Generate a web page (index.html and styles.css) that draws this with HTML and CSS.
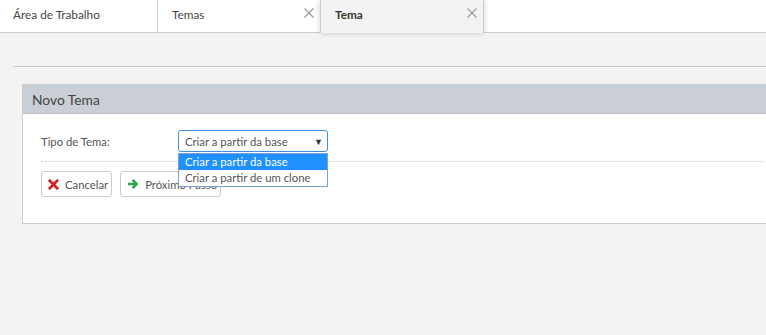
FILE: index.html
```html
<!DOCTYPE html>
<html lang="pt-BR">
<head>
    <meta charset="UTF-8">
    <meta name="viewport" content="width=device-width, initial-scale=1.0">
    <title>Tema</title>
    <link rel="stylesheet" href="styles.css">
</head>
<body>
    <div class="tabs">
        <div class="tab">Área de Trabalho</div>
        <div class="tab closable">Temas
            <svg class="tab-close" viewBox="0 0 10 10" width="10" height="10">
                <path d="M0.5 0.5 L9.5 9.5 M9.5 0.5 L0.5 9.5" stroke="#999" stroke-width="1.2"/>
            </svg>
        </div>
        <div class="tab closable active">Tema
            <svg class="tab-close" viewBox="0 0 10 10" width="10" height="10">
                <path d="M0.5 0.5 L9.5 9.5 M9.5 0.5 L0.5 9.5" stroke="#999" stroke-width="1.2"/>
            </svg>
        </div>
    </div>

    <div class="content">
        <hr class="separator">

        <div class="panel">
            <div class="panel-header">Novo Tema</div>
            <div class="panel-body">
                <div class="form-row">
                    <label class="form-label" for="tipoTema">Tipo de Tema:</label>
                    <div class="select-wrap">
                        <div class="select" id="tipoTema">
                            <span>Criar a partir da base</span>
                            <span class="select-arrow">&#9660;</span>
                        </div>
                        <ul class="select-list">
                            <li class="selected">Criar a partir da base</li>
                            <li>Criar a partir de um clone</li>
                        </ul>
                    </div>
                </div>
                <div class="form-actions">
                    <button type="button" class="btn">
                        <svg class="icon" viewBox="0 0 12 12" width="11" height="11">
                            <path d="M2 2 L10 10 M10 2 L2 10" stroke="#d21f1f" stroke-width="3" stroke-linecap="square"/>
                        </svg>
                        Cancelar
                    </button>
                    <button type="button" class="btn">
                        <svg class="icon" viewBox="0 0 12 12" width="12" height="12">
                            <path d="M1 6 H9.5 M5.5 1.8 L9.7 6 L5.5 10.2" stroke="#34a845" stroke-width="2.6" fill="none"/>
                        </svg>
                        Próximo Passo
                    </button>
                </div>
            </div>
        </div>
    </div>
</body>
</html>
```

FILE: styles.css
```css
/* Global styles */
body {
    font-family: Lato, 'Open Sans', sans-serif;
    font-size: 11.3px;
    color: #555;
    background: #f3f3f3;
    margin: 0;
    overflow: hidden;
}

/* Tab bar */
.tabs {
    display: flex;
    height: 32px;
    background: #fff;
    border-bottom: 1px solid #ccc;
}

.tab {
    position: relative;
    width: 144px;
    padding-left: 13px;
    line-height: 30px;
    font-size: 11.8px;
    color: #444;
    border-right: 1px solid #ccc;
}

.tab.closable {
    width: 148px;
    padding-left: 14px;
    border-right: none;
}

.tab.active {
    background: #f3f3f3;
    font-weight: bold;
    color: #333;
    height: 33px;
    border-left: 1px solid #ccc;
    border-right: 1px solid #ccc;
    box-shadow: 0 0 6px rgba(0, 0, 0, 0.18);
    z-index: 1;
}

.tab-close {
    position: absolute;
    right: 6px;
    top: 8px;
}

/* Content */
.content {
    padding-top: 33px;
}

.separator {
    margin: 0 0 0 13px;
    border: none;
    border-top: 1px solid #ccc;
}

.panel {
    margin: 17px -20px 0 22px;
    background: #fff;
    border: 1px solid #ccc;
}

.panel-header {
    height: 28px;
    line-height: 29px;
    padding-left: 9px;
    background: #c9cfd5;
    border-bottom: 1px solid #bcc2c8;
    font-size: 13.8px;
    color: #444;
}

.panel-body {
    padding: 16px 0 26px 18px;
}

.form-row {
    display: flex;
    align-items: center;
    padding-bottom: 9px;
    border-bottom: 1px dotted #ccc;
}

.form-label {
    width: 137px;
    color: #555;
}

.select-wrap {
    position: relative;
}

.select {
    display: flex;
    justify-content: space-between;
    align-items: center;
    box-sizing: border-box;
    width: 150px;
    height: 22px;
    padding: 0 4px 0 6px;
    border: 1px solid #3b8ee0;
    border-radius: 3px;
    color: #555;
}

.select-arrow {
    font-size: 9px;
    color: #333;
}

.select-list {
    position: absolute;
    top: 23px;
    left: 0;
    box-sizing: border-box;
    width: 150px;
    margin: 0;
    padding: 0;
    list-style: none;
    background: #fff;
    border: 1px solid #7c9fd6;
    z-index: 2;
}

.select-list li {
    height: 16px;
    line-height: 16px;
    padding-left: 6px;
    color: #555;
}

.select-list li.selected {
    background: #1e90ff;
    color: #fff;
}

/* Buttons */
.form-actions {
    display: flex;
    gap: 8px;
    margin-top: 9px;
}

.btn {
    display: flex;
    align-items: center;
    gap: 6px;
    height: 26px;
    padding: 0 3px 0 6px;
    background: #fff;
    border: 1px solid #ccc;
    border-radius: 3px;
    font-family: inherit;
    font-size: 11.3px;
    color: #555;
}
```
